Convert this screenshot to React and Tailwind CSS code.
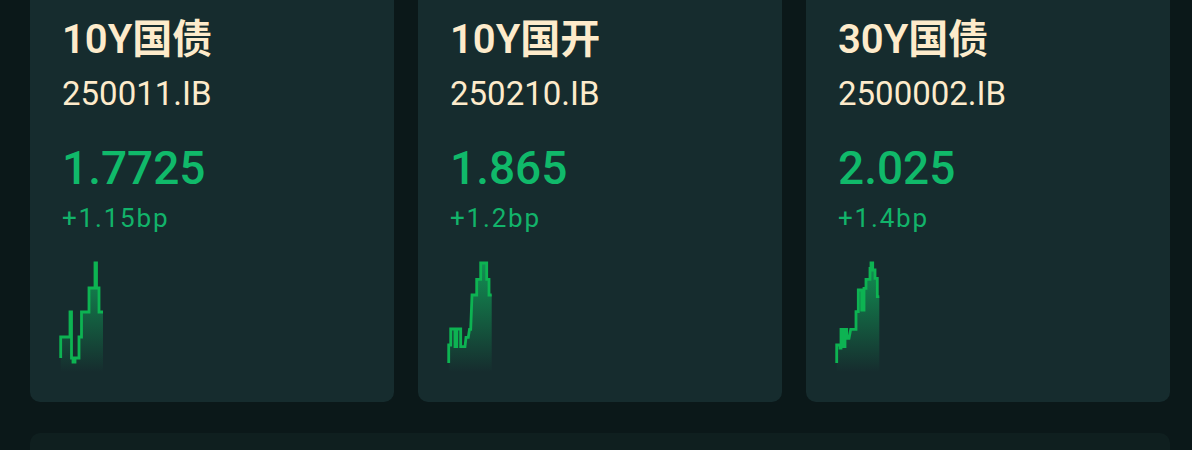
import React from "react";

const cards = [
  {
    title: "10Y国债",
    code: "250011.IB",
    value: "1.7725",
    change: "+1.15bp",
    path: "M0.7 96 V75 H10 V50 H11.5 V96 H13 V100 H15 V96 H19 V75 H21.5 V50 H29 V26 H35 V1 H36.5 V26 H39 V50 H43",
  },
  {
    title: "10Y国开",
    code: "250210.IB",
    value: "1.865",
    change: "+1.2bp",
    path: "M0.7 101 V83 H2.7 V67 H7 V84.7 H8.7 V67 H12.7 V84.7 H17 L18 75.3 H20.3 L21.5 67.3 H22.7 L24 33 H28.7 V17.3 H32.7 V1 H38.7 V17.3 H41 V33 H43.7",
  },
  {
    title: "30Y国债",
    code: "2500002.IB",
    value: "2.025",
    change: "+1.4bp",
    path: "M0.7 101 V83 H4 V86 H5 V67.3 H7.3 V84.7 H9 V67.3 H10.7 V76.3 H13 L14.7 67.3 H20 V49.7 H22.3 V28 H25.7 V48 H28 V26.3 H30 V17.3 H34 V6.3 H35 V1 H36.7 V8 H39 V16.3 H41.3 V34.7 H43.3",
  },
];

function Spark({ d, id }) {
  return (
    <svg width="46" height="110" viewBox="0 0 46 110" className="block -ml-[2px] overflow-visible">
      <defs>
        <linearGradient id={id} x1="0" y1="0" x2="0" y2="1">
          <stop offset="0%" stopColor="#10b35f" stopOpacity="0.75" />
          <stop offset="100%" stopColor="#10b35f" stopOpacity="0" />
        </linearGradient>
      </defs>
      <path d={`${d} V110 H0.7 Z`} fill={`url(#${id})`} />
      <path d={d} fill="none" stroke="#0db352" strokeWidth="2.8" strokeLinejoin="miter" />
    </svg>
  );
}

export default function App() {
  return (
    <div
      className="min-h-[450px] bg-[#0b1819] pl-[30px] pr-[22px]"
      style={{ fontFamily: 'Roboto, "Noto Sans CJK SC", sans-serif' }}
    >
      <div className="grid grid-cols-3 gap-6">
        {cards.map((c, i) => (
          <div key={i} className="rounded-b-[10px] bg-[#162c2e] px-8 pt-[18px] pb-[30px]">
            <div className="text-[40px] leading-[44px] font-semibold text-[#fdebcb]">{c.title}</div>
            <div className="mt-[12px] text-[33px] leading-[40px] text-[#fdebcb]">{c.code}</div>
            <div className="mt-[26px] text-[46px] leading-[56px] font-medium text-[#10b96a]">{c.value}</div>
            <div className="mt-[6px] text-[26px] leading-[32px] tracking-[0.07em] text-[#12b36a]">{c.change}</div>
            <div className="mt-[28px]">
              <Spark d={c.path} id={`g${i}`} />
            </div>
          </div>
        ))}
      </div>
      <div className="mt-[31px] h-[200px] rounded-t-[10px] bg-[#0f1f1f]" />
    </div>
  );
}
